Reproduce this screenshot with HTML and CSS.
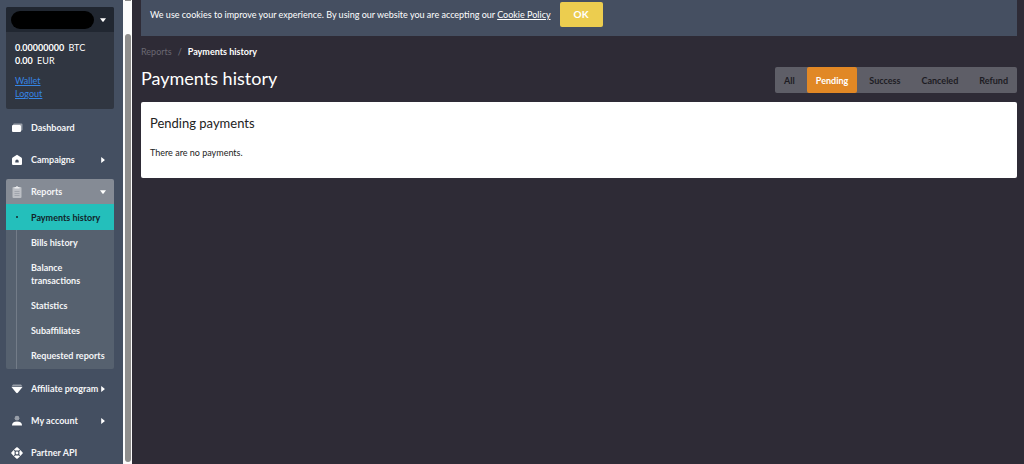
FILE: index.html
```html
<!DOCTYPE html>
<html lang="en">
<head>
    <meta charset="UTF-8">
    <meta name="viewport" content="width=device-width, initial-scale=1.0">
    <title>Payments history</title>
    <link rel="stylesheet" href="styles.css">
</head>
<body>
    <aside class="sidebar">
        <div class="sidebar-content">
            <div class="account">
                <button class="account-toggle" aria-label="Account">
                    <span class="account-name"></span>
                    <svg class="arrow" viewBox="0 0 6 6"><path d="M0 1.2h6L3.6 4.4q-.6.6-1.2 0z"/></svg>
                </button>
                <div class="account-body">
                    <div><strong>0.00000000</strong> BTC</div>
                    <div><strong>0.00</strong> EUR</div>
                    <div class="account-links">
                        <a href="#">Wallet</a>
                        <a href="#">Logout</a>
                    </div>
                </div>
            </div>

            <nav class="menu">
                <a class="menu-item" href="#">
                    <svg class="icon" viewBox="0 0 12 12"><path class="dim" d="M3 1.5h7.5q1 0 1 1V8L10 9V3H2q0-1.5 1-1.5z"/><rect x="1" y="3" width="9" height="7" rx="1"/></svg>
                    <span>Dashboard</span>
                </a>
                <a class="menu-item" href="#">
                    <svg class="icon" viewBox="0 0 12 12"><path fill-rule="evenodd" d="M6 .8 10.3 3.6q.7.5.7 1.3v5q0 1.100-1.100 1.100H2.100Q1 11 1 9.900v-5q0-.8.7-1.300zM6 5.500a1.700 1.700 0 0 0-1.700 1.700V8.500h3.400V7.200A1.700 1.700 0 0 0 6 5.500z"/></svg>
                    <span>Campaigns</span>
                    <svg class="arrow" viewBox="0 0 6 6"><path d="M1.2 0v6l3.2-2.4q.6-.6 0-1.2z"/></svg>
                </a>
                <div class="menu-group">
                    <a class="menu-item menu-open" href="#">
                        <svg class="icon" viewBox="0 0 12 12"><rect class="dim" x="1.5" y="1" width="9" height="11" rx="1"/><path class="soft" d="M3.5 2.500V1H5a1 1 0 0 1 2 0h1.500v1.500z"/><path class="line" d="M3.500 5.500h5M3.500 7.500h5M3.500 9.500h5"/></svg>
                        <span>Reports</span>
                        <svg class="arrow" viewBox="0 0 6 6"><path d="M0 1.2h6L3.6 4.4q-.6.6-1.2 0z"/></svg>
                    </a>
                    <div class="submenu">
                        <a class="active" href="#">Payments history</a>
                        <a href="#">Bills history</a>
                        <a href="#">Balance transactions</a>
                        <a href="#">Statistics</a>
                        <a href="#">Subaffiliates</a>
                        <a href="#">Requested reports</a>
                    </div>
                </div>
                <a class="menu-item" href="#">
                    <svg class="icon" viewBox="0 0 12 12"><path class="dim" d="M2 1.5h8l1.500 2H.5z"/><path d="M.5 4h11L6.8 9.8q-.8.8-1.6 0z"/></svg>
                    <span>Affiliate program</span>
                    <svg class="arrow" viewBox="0 0 6 6"><path d="M1.2 0v6l3.2-2.4q.6-.6 0-1.2z"/></svg>
                </a>
                <a class="menu-item" href="#">
                    <svg class="icon" viewBox="0 0 12 12"><circle class="dim" cx="6" cy="3.2" r="2.400"/><path d="M1 10.500Q1 6.500 6 6.500t5 4z"/></svg>
                    <span>My account</span>
                    <svg class="arrow" viewBox="0 0 6 6"><path d="M1.2 0v6l3.2-2.4q.6-.6 0-1.2z"/></svg>
                </a>
                <a class="menu-item" href="#">
                    <svg class="icon" viewBox="0 0 12 12"><circle cx="6" cy="6" r="1.4"/><path d="M6 0 9 2.600 7.800 3.600H4.200L3 2.600zM6 12 9 9.400 7.800 8.400H4.200L3 9.400zM0 6 2.600 3l1 1.200v3.600L2.600 9zM12 6 9.400 3l-1 1.200v3.600L9.400 9z"/></svg>
                    <span>Partner API</span>
                </a>
            </nav>
        </div>
        <div class="scrollbar">
            <div class="scrollbar-top"></div>
            <div class="scrollbar-thumb"></div>
        </div>
    </aside>

    <main class="main">
        <div class="cookie-bar">
            <p>We use cookies to improve your experience. By using our website you are accepting our <a href="#">Cookie Policy</a></p>
            <button class="ok-btn">OK</button>
        </div>

        <div class="breadcrumbs">
            <a href="#">Reports</a>
            <span>/</span>
            <strong>Payments history</strong>
        </div>

        <div class="page-header">
            <h1>Payments history</h1>
            <div class="filters">
                <button>All</button>
                <button class="selected">Pending</button>
                <button>Success</button>
                <button>Canceled</button>
                <button>Refund</button>
            </div>
        </div>

        <section class="card">
            <h2>Pending payments</h2>
            <p>There are no payments.</p>
        </section>
    </main>
</body>
</html>
```
FILE: styles.css
```css
* {
    margin: 0;
    padding: 0;
    box-sizing: border-box;
}

body {
    display: flex;
    height: 100vh;
    overflow: hidden;
    background: #2e2b36;
    color: white;
    font-family: Lato, "Open Sans", sans-serif;
    font-size: 9px;
    line-height: 13px;
}

button {
    border: none;
    font: inherit;
    cursor: pointer;
}

/* Sidebar */
.sidebar {
    display: flex;
    flex: none;
    width: 132px;
    overflow: hidden;
}

.sidebar-content {
    flex: 1;
    padding: 7px 9px 0 6px;
    background: #444f61;
}

.account {
    margin-bottom: 6px;
    border-radius: 2px;
    background: #303641;
    overflow: hidden;
}

.account-toggle {
    display: flex;
    align-items: center;
    justify-content: space-between;
    width: 100%;
    height: 25px;
    padding: 0 8px 0 5px;
    background: #212731;
}

.account-name {
    width: 83px;
    height: 18px;
    border-radius: 9px;
    background: black;
}

.account-body {
    padding: 9px;
}

.account-body strong {
    margin-right: 2px;
}

.account-links {
    display: flex;
    flex-direction: column;
    align-items: flex-start;
    margin-top: 7px;
}

.account-links a {
    color: #3585e5;
}

.menu {
    display: flex;
    flex-direction: column;
    gap: 7px;
    font-weight: 700;
}

.menu a {
    color: #f4f5f7;
    text-decoration: none;
}

.menu-item {
    display: flex;
    align-items: center;
    height: 25px;
    padding: 0 8px 0 5px;
    white-space: nowrap;
}

.menu-open {
    border-radius: 2px 2px 0 0;
    background: #858b95;
}

.icon {
    flex: none;
    width: 12px;
    height: 12px;
    margin-right: 8px;
    fill: white;
}

.icon .dim {
    opacity: 0.45;
}

.icon .soft {
    opacity: 0.7;
}

.icon .line {
    stroke: #858b95;
    stroke-width: 0.5;
}

.arrow {
    flex: none;
    width: 6px;
    height: 6px;
    margin-left: auto;
    fill: white;
}

.submenu {
    display: flex;
    flex-direction: column;
    padding-bottom: 1px;
    border-radius: 0 0 2px 2px;
    background: linear-gradient(#737c88, #737c88) 10px 0 / 1px 100% no-repeat #56616f;
}

.submenu a {
    padding: 6px 8px 6px 25px;
}

.submenu .active {
    display: flex;
    align-items: center;
    height: 26px;
    padding-left: 10px;
    background: #24bfbb;
    color: #12242a;
}

.active::before {
    content: "";
    width: 2px;
    height: 2px;
    margin-right: 13px;
    border-radius: 50%;
    background: #12242a;
}

.scrollbar {
    display: flex;
    flex-direction: column;
    width: 9px;
    padding: 0 1px 2px 2px;
    background: #fcfcfc;
}

.scrollbar-top {
    height: 1px;
    margin-bottom: 33px;
    background: #8b8b8b;
}

.scrollbar-thumb {
    flex: 1;
    border-radius: 3px;
    background: #8f8e8d;
}

/* Page */
.main {
    flex: 1;
    padding: 0 7px 0 9px;
}

.cookie-bar {
    display: flex;
    align-items: center;
    gap: 9px;
    padding: 2px 9px 9px;
    background: #454f61;
}

.cookie-bar a {
    color: white;
}

.ok-btn {
    height: 25px;
    padding: 0 14px;
    border-radius: 2px;
    background: #eccd4f;
    color: white;
    font-size: 10px;
    font-weight: 700;
}

.breadcrumbs {
    display: flex;
    gap: 6px;
    margin-top: 9px;
    color: #77757e;
}

.breadcrumbs a {
    color: #6a6872;
    text-decoration: none;
}

.breadcrumbs strong {
    color: white;
}

.page-header {
    display: flex;
    align-items: flex-start;
    justify-content: space-between;
    margin: 9px 0;
}

h1 {
    font-size: 18px;
    font-weight: 400;
    line-height: 22px;
}

.filters {
    display: flex;
    gap: 3px;
    border-radius: 2px;
    background: #5e5e67;
}

.filters button {
    height: 26px;
    padding: 0 9px;
    border-radius: 2px;
    background: none;
    color: #1d1c23;
    font-weight: 700;
}

.filters .selected {
    background: #e18825;
    color: white;
}

.card {
    padding: 12px 9px 19px;
    border-radius: 2px;
    background: white;
    color: #222;
}

h2 {
    margin-bottom: 14px;
    font-size: 13px;
    font-weight: 400;
    line-height: 18px;
}
```
